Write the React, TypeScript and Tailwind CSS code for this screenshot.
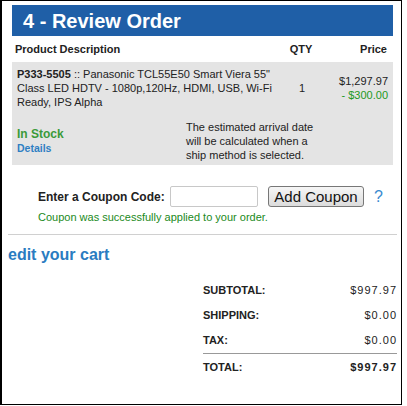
import React from "react";

const totals = [
  { label: "SUBTOTAL:", value: "$997.97" },
  { label: "SHIPPING:", value: "$0.00" },
  { label: "TAX:", value: "$0.00" },
];

export default function App() {
  return (
    <div className="h-[406px] w-[407px] bg-white font-['Liberation_Sans',Arial,sans-serif] text-[#222]">
      <div className="h-[405px] w-[402px] border border-l-2 border-black pl-[10px] pr-[8px] pt-[4px]">
        {/* header */}
        <div className="flex h-[31px] items-center bg-[#1f5fa7] pl-[11px] text-[20px] font-bold text-white">
          4 - Review Order
        </div>

        {/* column titles */}
        <div className="flex h-[26px] items-center text-[11px] font-bold">
          <div className="flex-1 pl-[3px]">Product Description</div>
          <div className="w-[60px] text-center">QTY</div>
          <div className="w-[62px] pr-[6px] text-right">Price</div>
        </div>

        {/* product box */}
        <div className="h-[103px] bg-[#e4e4e4] pt-[5px] text-[11px] leading-[14px]">
          <div className="flex">
            <div className="w-[262px] pl-[5px]">
              <span className="font-bold">P333-5505</span> :: Panasonic TCL55E50 Smart Viera 55" Class LED HDTV - 1080p,120Hz, HDMI, USB, Wi-Fi Ready, IPS Alpha
            </div>
            <div className="flex w-[56px] items-center justify-center">1</div>
            <div className="flex flex-1 flex-col justify-center pr-[5px] text-right">
              <span>$1,297.97</span>
              <span className="text-[#229922]">- $300.00</span>
            </div>
          </div>
          <div className="mt-[11px] flex">
            <div className="w-[174px] pl-[5px] pt-[7px]">
              <div className="text-[12px] font-bold leading-[14px] text-[#3a9a3a]">In Stock</div>
              <div className="text-[10.5px] font-bold leading-[14px] text-[#2f7fc3]">Details</div>
            </div>
            <div className="w-[140px]">
              The estimated arrival date will be calculated when a ship method is selected.
            </div>
          </div>
        </div>

        {/* coupon */}
        <div className="pl-[26px] pt-[21px]">
          <div className="flex items-center">
            <span className="w-[132px] whitespace-nowrap text-[12px] font-bold">Enter a Coupon Code:</span>
            <input className="h-[21px] w-[88px] rounded-[2px] border border-[#c8c8c8] bg-white" />
            <button className="ml-[10px] h-[21px] w-[96px] rounded-[3px] border border-[#777] bg-gradient-to-b from-[#f6f6f6] to-[#dcdcdc] text-[15px] leading-none text-[#111]">
              Add Coupon
            </button>
            <span className="ml-[10px] text-[16px] leading-none text-[#3a8ad0]">?</span>
          </div>
          <div className="mt-[4px] text-[11px] leading-[13px] text-[#1b8a1b]">
            Coupon was successfully applied to your order.
          </div>
        </div>

        <div className="ml-[-4px] mr-[-4px] mt-[10px] border-t border-[#d0d0d0]" />

        <div className="ml-[-4px] pt-[11px] text-[16px] font-bold leading-[18px] text-[#2a7cc1]">edit your cart</div>

        {/* totals */}
        <div className="ml-[191px] mr-[-4px] mt-[14px] text-[11px]">
          {totals.map((t) => (
            <div key={t.label} className="flex h-[25px] items-center justify-between">
              <span className="font-bold">{t.label}</span>
              <span className="tracking-[1px]">{t.value}</span>
            </div>
          ))}
          <div className="flex h-[28px] items-center justify-between border-t border-[#999] font-bold">
            <span>TOTAL:</span>
            <span className="tracking-[1px]">$997.97</span>
          </div>
        </div>
      </div>
    </div>
  );
}
